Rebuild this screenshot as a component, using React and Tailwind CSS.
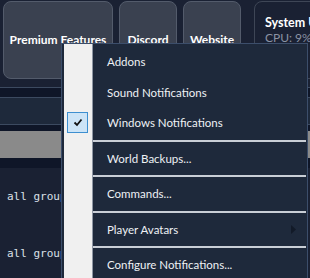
import React from 'react';

const items = [
  { type: 'item', label: 'Addons' },
  { type: 'item', label: 'Sound Notifications' },
  { type: 'item', label: 'Windows Notifications', checked: true },
  { type: 'sep' },
  { type: 'item', label: 'World Backups...' },
  { type: 'sep' },
  { type: 'item', label: 'Commands...' },
  { type: 'sep' },
  { type: 'item', label: 'Player Avatars', sub: true },
  { type: 'sep' },
  { type: 'item', label: 'Configure Notifications...' },
];

function Card({ children, className }) {
  return (
    <div className={`shrink-0 h-[78px] rounded-[8px] border border-[#535b6b] bg-[#3a4150] flex items-center justify-center text-[12px] font-bold text-white whitespace-nowrap ${className}`}>
      {children}
    </div>
  );
}

export default function App() {
  return (
    <div
      className="relative w-[310px] h-[278px] overflow-hidden bg-[#1a2133]"
      style={{ fontFamily: 'Lato, "Noto Sans", sans-serif' }}
    >
      {/* top cards */}
      <div className="flex pt-[1px] pl-[3px]">
        <Card className="w-[110px]">Premium Features</Card>
        <Card className="w-[58px] ml-[6px]">Discord</Card>
        <Card className="w-[58px] ml-[6px]">Website</Card>
        <div className="shrink-0 h-[78px] w-[90px] ml-[13px] rounded-[8px] border border-[#3e4656] pl-[10px] pt-[13px]">
          <div className="text-[12.5px] font-bold text-white leading-[15px] whitespace-nowrap">System Usage</div>
          <div className="text-[12px] text-[#8b93a3] leading-[16px] whitespace-nowrap">CPU: 9%</div>
        </div>
      </div>

      {/* table behind */}
      <div className="mt-[8px]">
        <div className="h-[11px] border-y border-[#3c4a60] bg-[#0f1628]" />
        <div className="h-[26px] bg-[#1e293b]" />
        <div className="h-[7px] border-t border-[#3c4a60] bg-[#0f1628]" />
        <div className="h-[27px] bg-[#8a8a8a]" />
        <div className="h-[10px] bg-[#0f1628]" />
        <div
          className="pl-[7px] pt-[21px] text-[11px] text-[#dbe0e8] leading-[16px]"
          style={{ fontFamily: '"DejaVu Sans Mono", monospace' }}
        >
          <div>all groups</div>
          <div className="mt-[41px]">all groups</div>
        </div>
      </div>

      {/* context menu */}
      <div className="absolute left-[61px] top-[43px] w-[247px] h-[250px] flex border border-[#3c4e6b] bg-[#1e293b]">
        <div className="w-[2px]" />
        <div className="w-[28px] bg-[#f0f0f0]" />
        <div className="w-[1px] bg-[#8e96a3]" />
        <div className="flex-1 pt-[2.5px] pr-[1px]">
          {items.map((it, i) =>
            it.type === 'sep' ? (
              <div key={i} className="h-[5px] flex items-center">
                <div className="w-full h-[2px] bg-[#c9ced6]" />
              </div>
            ) : (
              <div key={i} className="relative h-[30.5px] flex items-center pl-[14px] text-[11.5px] text-[#eef1f5]">
                {it.checked && (
                  <div className="absolute left-[-26px] top-[4.5px] w-[21px] h-[21px] bg-[#cce4f7] border border-[#3d8fd0] flex items-center justify-center">
                    <svg width="10" height="9" viewBox="0 0 10 9">
                      <path d="M1.5 4.5 L4 7 L8.5 1.5" fill="none" stroke="#111" strokeWidth="1.8" />
                    </svg>
                  </div>
                )}
                <span className="whitespace-nowrap">{it.label}</span>
                {it.sub && (
                  <svg className="absolute right-[10px]" width="5" height="9" viewBox="0 0 5 9">
                    <path d="M0 0 L5 4.5 L0 9 Z" fill="#121a28" />
                  </svg>
                )}
              </div>
            )
          )}
        </div>
      </div>
    </div>
  );
}
